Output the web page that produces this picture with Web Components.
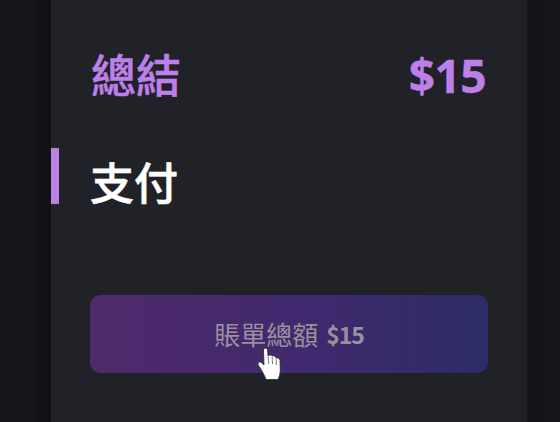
<!DOCTYPE html>
<html lang="zh-Hant">
<head>
<meta charset="utf-8">
<title>支付</title>
<style>
html, body { margin: 0; height: 100%; overflow: hidden; background: #15161a; }
</style>
</head>
<body>
<checkout-page>
  <summary-row label="總結" amount="$15"></summary-row>
  <section-title>支付</section-title>
  <pay-button amount="$15">賬單總額</pay-button>
</checkout-page>
<script>
const pageTpl = document.createElement("template")
pageTpl.innerHTML = /*html*/`
<style>
:host {
  display: block;
  width: 560px;
  height: 422px;
  overflow: hidden;
  padding-left: 51px;
  box-sizing: border-box;
  background: linear-gradient(90deg, #16171b 0, #16171b 30px, #101114 46px, #101114 51px, #15161a 527px, #131418 540px, #17181c 560px);
}
#panel {
  width: 476px;
  height: 422px;
  background: #212227;
  display: flex;
  flex-direction: column;
}
</style>
<div id="panel"><slot></slot></div>
`

class CheckoutPage extends HTMLElement {
  constructor() {
    super()
    this.attachShadow({mode: "open"}).append(pageTpl.content.cloneNode(true))
  }
}

const rowTpl = document.createElement("template")
rowTpl.innerHTML = /*html*/`
<style>
:host {
  display: flex;
  justify-content: space-between;
  align-items: center;
  height: 56px;
  margin-top: 47px;
  padding: 0 41px 0 40px;
  color: #bd7fe8;
  font: 700 46px/56px "Noto Sans", "Noto Sans CJK TC", sans-serif;
}
#label {
  font: 500 45px/56px "Noto Sans CJK TC", sans-serif;
  -webkit-text-stroke: .5px #bd7fe8;
  margin-top: -2px;
}
#amount { letter-spacing: -.6px; -webkit-text-stroke: .4px #bd7fe8; }
</style>
<span id="label"></span><span id="amount"></span>
`

class SummaryRow extends HTMLElement {
  constructor() {
    super()
    this.attachShadow({mode: "open"}).append(rowTpl.content.cloneNode(true))
  }
  connectedCallback() {
    this.shadowRoot.getElementById("label").textContent = this.getAttribute("label")
    this.shadowRoot.getElementById("amount").textContent = this.getAttribute("amount")
  }
}

const titleTpl = document.createElement("template")
titleTpl.innerHTML = /*html*/`
<style>
:host {
  display: block;
  height: 56px;
  margin-top: 45px;
  padding-left: 31px;
  border-left: 8px solid #bd7fe8;
  color: #fff;
  font: 500 44px/67px "Noto Sans CJK TC", sans-serif;
  -webkit-text-stroke: .6px #fff;
}
</style>
<slot></slot>
`

class SectionTitle extends HTMLElement {
  constructor() {
    super()
    this.attachShadow({mode: "open"}).append(titleTpl.content.cloneNode(true))
  }
}

const btnTpl = document.createElement("template")
btnTpl.innerHTML = /*html*/`
<style>
:host {
  display: block;
  position: relative;
  margin: 91px 39px 0 39px;
}
button {
  display: flex;
  align-items: center;
  justify-content: center;
  gap: 8px;
  width: 398px;
  height: 78px;
  padding: 0;
  border: 0;
  border-radius: 11px;
  background: linear-gradient(90deg, #4f2a6c 0, #42296d 50%, #2c2c66 100%);
  color: #98929f;
  font: 400 26px/1 "Noto Sans CJK TC", sans-serif;
}
#amount { font: 700 23px/1 "Noto Sans CJK TC", sans-serif; letter-spacing: -1px; }
svg {
  position: absolute;
  left: 167px;
  top: 51px;
}
</style>
<button><span><slot></slot></span><span id="amount"></span></button>
<svg width="26" height="36" viewBox="0 0 26 36">
  <path d="M6.500 4C6.500 1.500 10.500 1.500 10.600 4L11 10C12.500 8.500 14.500 8.500 15 10C16.500 9.500 18.500 10 19 12C20.500 11.500 22.700 12.500 23 14.500L23.300 24C23.300 28 22 31 21 33.500L9 33.500C7.500 29 4 23 1.500 19.500C0 17 2.500 15 4.500 16.500L7 19Z" fill="#fff" stroke="#26262e" stroke-width=".8"/>
  <path d="M11.200 11l.4 7M15.200 11l.3 7M19.200 13l.2 6" stroke="#77777f" stroke-width="1" fill="none"/>
</svg>
`

class PayButton extends HTMLElement {
  constructor() {
    super()
    this.attachShadow({mode: "open"}).append(btnTpl.content.cloneNode(true))
  }
  connectedCallback() {
    this.shadowRoot.getElementById("amount").textContent = this.getAttribute("amount")
  }
}

customElements.define("checkout-page", CheckoutPage)
customElements.define("summary-row", SummaryRow)
customElements.define("section-title", SectionTitle)
customElements.define("pay-button", PayButton)
</script>
</body>
</html>
